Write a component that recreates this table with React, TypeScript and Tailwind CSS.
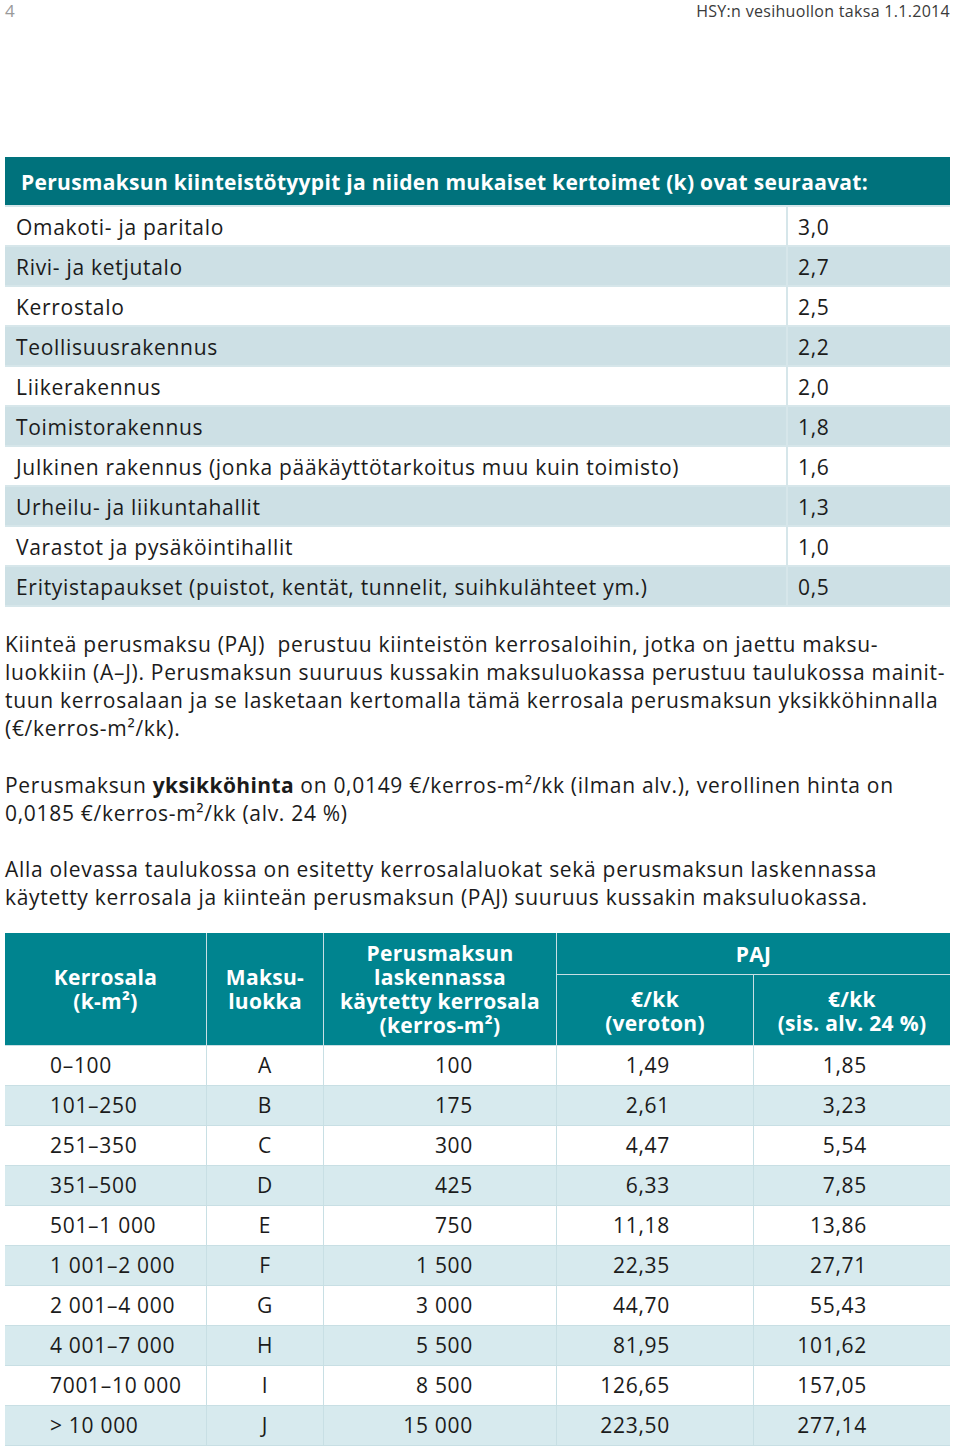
import React from "react";

const types: [string, string][] = [
  ["Omakoti- ja paritalo", "3,0"],
  ["Rivi- ja ketjutalo", "2,7"],
  ["Kerrostalo", "2,5"],
  ["Teollisuusrakennus", "2,2"],
  ["Liikerakennus", "2,0"],
  ["Toimistorakennus", "1,8"],
  ["Julkinen rakennus (jonka pääkäyttötarkoitus muu kuin toimisto)", "1,6"],
  ["Urheilu- ja liikuntahallit", "1,3"],
  ["Varastot ja pysäköintihallit", "1,0"],
  ["Erityistapaukset (puistot, kentät, tunnelit, suihkulähteet ym.)", "0,5"],
];

const rows: string[][] = [
  ["0–100", "A", "100", "1,49", "1,85"],
  ["101–250", "B", "175", "2,61", "3,23"],
  ["251–350", "C", "300", "4,47", "5,54"],
  ["351–500", "D", "425", "6,33", "7,85"],
  ["501–1 000", "E", "750", "11,18", "13,86"],
  ["1 001–2 000", "F", "1 500", "22,35", "27,71"],
  ["2 001–4 000", "G", "3 000", "44,70", "55,43"],
  ["4 001–7 000", "H", "5 500", "81,95", "101,62"],
  ["7001–10 000", "I", "8 500", "126,65", "157,05"],
  ["> 10 000", "J", "15 000", "223,50", "277,14"],
];

const head =
  "bg-[#00848f] text-white font-bold text-[21px] leading-[24px] tracking-[0.3px] flex items-center justify-center text-center";

export default function App() {
  return (
    <div
      className="w-[960px] h-[1449px] bg-white text-[#1b1b1b] overflow-hidden tracking-[0.7px]"
      style={{ fontFamily: "'Open Sans', sans-serif" }}
    >
      {/* page header */}
      <div className="flex justify-between items-start pl-[5px] pr-[10px] pt-[1px] h-[22px] text-[16px] leading-[20px] tracking-[0.3px]">
        <span className="text-[#9a9a9a] text-[17px]">4</span>
        <span className="text-[#3a3a3a]">HSY:n vesihuollon taksa 1.1.2014</span>
      </div>

      {/* top table */}
      <div className="mx-[5px] mt-[135px] w-[945px] bg-[#d6e6ea] flex flex-col gap-[2px] pb-[2px]">
        <div className="bg-[#00727c] h-[48px] flex items-center px-[16px] pt-[3px] text-white font-bold text-[21px] tracking-[0.3px]">
          Perusmaksun kiinteistötyypit ja niiden mukaiset kertoimet (k) ovat seuraavat:
        </div>
        {types.map(([name, k], i) => (
          <div key={i} className="grid grid-cols-[781px_162px] gap-[2px] h-[38px]">
            <div
              className={`${i % 2 === 0 ? "bg-white" : "bg-[#cde0e5]"} flex items-center px-[11px] pt-[3px] text-[21px]`}
            >
              {name}
            </div>
            <div
              className={`${i % 2 === 0 ? "bg-white" : "bg-[#cde0e5]"} flex items-center px-[10px] pt-[3px] text-[21px]`}
            >
              {k}
            </div>
          </div>
        ))}
      </div>

      {/* paragraphs */}
      <div className="px-[5px] mt-[23px] text-[21px] leading-[28px] whitespace-nowrap">
        <p>
          Kiinteä perusmaksu (PAJ)&nbsp; perustuu kiinteistön kerrosaloihin, jotka on jaettu maksu-
          <br />
          luokkiin (A–J). Perusmaksun suuruus kussakin maksuluokassa perustuu taulukossa mainit-
          <br />
          tuun kerrosalaan ja se lasketaan kertomalla tämä kerrosala perusmaksun yksikköhinnalla
          <br />
          (€/kerros-m²/kk).
        </p>
        <p className="mt-[29px]">
          Perusmaksun <b className="tracking-[0.4px]">yksikköhinta</b> on 0,0149 €/kerros-m²/kk (ilman alv.), verollinen hinta on
          <br />
          0,0185 €/kerros-m²/kk (alv. 24 %)
        </p>
        <p className="mt-[28px]">
          Alla olevassa taulukossa on esitetty kerrosalaluokat sekä perusmaksun laskennassa
          <br />
          käytetty kerrosala ja kiinteän perusmaksun (PAJ) suuruus kussakin maksuluokassa.
        </p>
      </div>

      {/* second table */}
      <div className="mx-[5px] mt-[22px] w-[945px] grid grid-cols-[201px_116px_232px_196px_196px] grid-rows-[41px_70px_repeat(10,39px)] gap-px bg-[#c8dfe4] border-b border-[#c8dfe4]">
        <div className={`row-span-2 ${head}`}>
          <span>
            Kerrosala
            <br />
            (k-m²)
          </span>
        </div>
        <div className={`row-span-2 ${head}`}>
          <span>
            Maksu-
            <br />
            luokka
          </span>
        </div>
        <div className={`row-span-2 ${head}`}>
          <span>
            Perusmaksun
            <br />
            laskennassa
            <br />
            käytetty kerrosala
            <br />
            (kerros-m²)
          </span>
        </div>
        <div className={`col-span-2 ${head}`}>PAJ</div>
        <div className={`${head} pt-[2px]`}>
          <span>
            €/kk
            <br />
            (veroton)
          </span>
        </div>
        <div className={`${head} pt-[2px]`}>
          <span>
            €/kk
            <br />
            (sis. alv. 24 %)
          </span>
        </div>
        {rows.map((r, i) => {
          const bg = i % 2 === 0 ? "bg-white" : "bg-[#d7eaee]";
          return (
            <React.Fragment key={i}>
              <div className={`${bg} flex items-center pl-[45px] text-[21px]`}>{r[0]}</div>
              <div className={`${bg} flex items-center justify-center text-[21px]`}>{r[1]}</div>
              <div className={`${bg} flex items-center justify-end pr-[83px] text-[21px]`}>{r[2]}</div>
              <div className={`${bg} flex items-center justify-end pr-[83px] text-[21px]`}>{r[3]}</div>
              <div className={`${bg} flex items-center justify-end pr-[83px] text-[21px]`}>{r[4]}</div>
            </React.Fragment>
          );
        })}
      </div>
    </div>
  );
}
